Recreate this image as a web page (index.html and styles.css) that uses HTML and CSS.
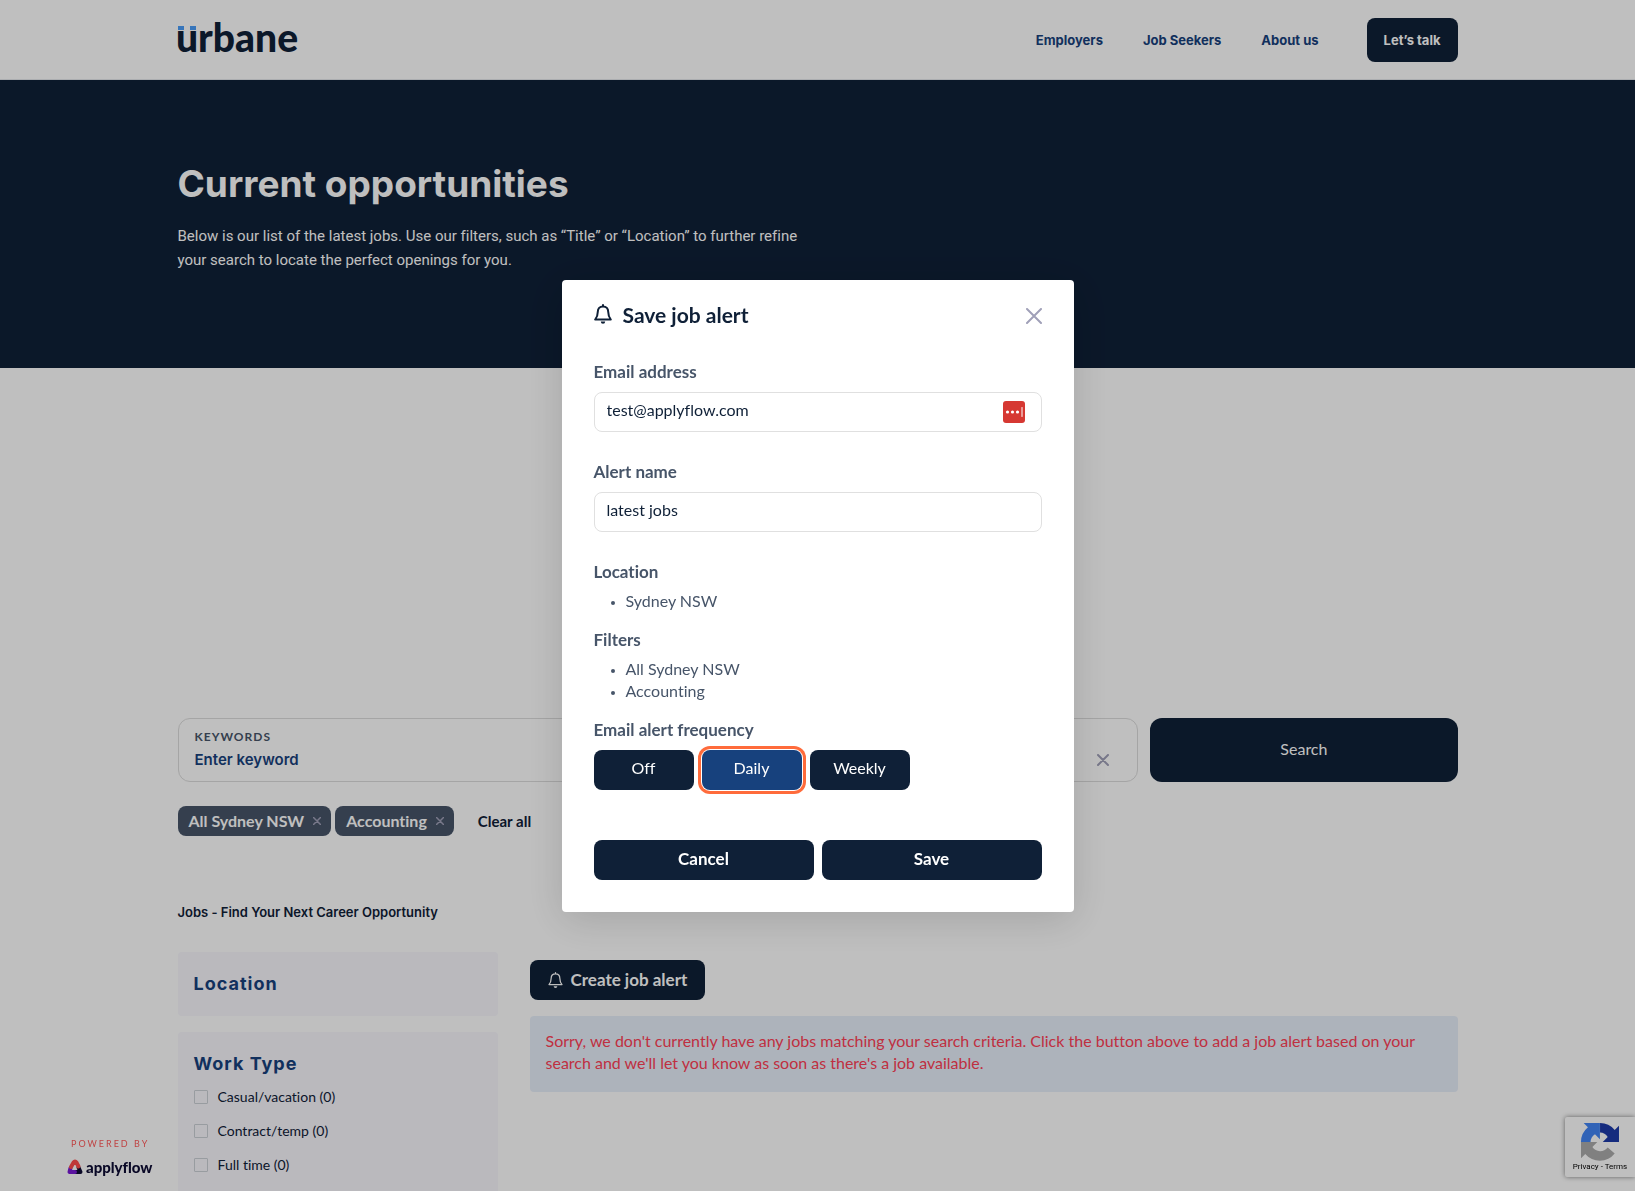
FILE: index.html
```html
<!DOCTYPE html>
<html lang="en">
<head>
    <meta charset="UTF-8">
    <meta name="viewport" content="width=device-width, initial-scale=1.0">
    <title>Current opportunities</title>
    <link rel="stylesheet" href="styles.css">
</head>
<body>
    <header class="site-header">
        <div class="container header-row">
            <a href="#" class="logo" aria-label="urbane">
                <svg width="124" height="46" viewBox="0 0 124 46">
                    <rect x="0" y="9" width="6" height="4" fill="#4a9df8"/>
                    <rect x="12" y="9" width="6" height="4" fill="#4a9df8"/>
                    <text x="-2" y="35" class="logo-text">urbane</text>
                </svg>
            </a>
            <nav class="nav">
                <a href="#">Employers</a>
                <a href="#">Job Seekers</a>
                <a href="#">About us</a>
                <a href="#" class="nav-button">Let’s talk</a>
            </nav>
        </div>
    </header>

    <section class="hero">
        <div class="container">
            <h1>Current opportunities</h1>
            <p>Below is our list of the latest jobs. Use our filters, such as “Title” or “Location” to further refine your search to locate the perfect openings for you.</p>
        </div>
    </section>

    <main class="container content">
        <form class="search">
            <div class="search-box">
                <div class="search-field">
                    <label for="keywords">Keywords</label>
                    <input type="text" id="keywords" placeholder="Enter keyword">
                </div>
                <button type="button" class="search-clear" aria-label="Clear location">
                    <svg width="12" height="12" viewBox="0 0 12 12"><path d="M1 1l10 10M11 1L1 11"/></svg>
                </button>
            </div>
            <button type="submit" class="search-button">Search</button>
        </form>

        <div class="tags">
            <button type="button" class="tag">All Sydney NSW
                <svg width="8" height="8" viewBox="0 0 8 8"><path d="M0.5 0.5l7 7M7.5 0.5l-7 7"/></svg>
            </button>
            <button type="button" class="tag">Accounting
                <svg width="8" height="8" viewBox="0 0 8 8"><path d="M0.5 0.5l7 7M7.5 0.5l-7 7"/></svg>
            </button>
            <button type="button" class="clear-all">Clear all</button>
        </div>

        <h2 class="page-title">Jobs - Find Your Next Career Opportunity</h2>

        <div class="columns">
            <aside class="sidebar">
                <section class="filter-card">
                    <h3>Location</h3>
                </section>
                <section class="filter-card">
                    <h3>Work Type</h3>
                    <label class="option"><input type="checkbox"> Casual/vacation (0)</label>
                    <label class="option"><input type="checkbox"> Contract/temp (0)</label>
                    <label class="option"><input type="checkbox"> Full time (0)</label>
                </section>
            </aside>
            <div class="results">
                <button type="button" class="create-alert">
                    <svg width="15" height="18" viewBox="0 0 18 20" class="bell"><path d="M9 2.500c-3.300 0-5.200 2.300-5.200 5.300 0 4-1 5.700-2.600 7.700h15.600c-1.600-2-2.600-3.700-2.600-7.700 0-3-1.900-5.300-5.200-5.300zM9 2.500v-1.500"/><path class="clapper" d="M6.800 17.500h4.400a2.200 2.200 0 0 1-4.400 0z"/></svg>
                    Create job alert
                </button>
                <p class="no-jobs">Sorry, we don't currently have any jobs matching your search criteria. Click the button above to add a job alert based on your search and we'll let you know as soon as there's a job available.</p>
            </div>
        </div>
    </main>

    <a href="#" class="powered">
        <span class="powered-label">Powered by</span>
        <span class="powered-brand">
            <svg width="16" height="16" viewBox="0 0 16 16" fill="none" stroke-width="4" stroke-linecap="round">
                <path d="M8 13H13.500L11.500 8.500" stroke="#0d0b33" stroke-linejoin="round"/>
                <path d="M3.500 9L2.500 13H8" stroke="#7a1ad6" stroke-linejoin="round"/>
                <path d="M4 8L6.500 3.500Q8 1.500 9.500 3.500L11.500 7.500" stroke="#ff4d4d"/>
            </svg>
            applyflow
        </span>
    </a>

    <div class="recaptcha">
        <svg width="38" height="38" viewBox="0 0 64 64">
            <path fill="#1c3aa9" d="M64 31.960c0-.460-.010-.920-.030-1.370V4.610l-7.180 7.180A31.940 31.940 0 0 0 32.070.030V16.200a16 16 0 0 1 12.900 7.500l-8.330 8.260z"/>
            <path fill="#4285f4" d="M31.860 0H4.520l7.180 7.180A31.940 31.940 0 0 0 0 31.960h16.100a16 16 0 0 1 7.420-12.930l8.340 8.260z"/>
            <path fill="#ababab" d="M0 32.040V59.400l7.180-7.180a31.940 31.940 0 0 0 49.570-.900L45.070 41.200a16 16 0 0 1-25.900-.700l8.260-8.460z"/>
        </svg>
        <div><a href="#">Privacy</a> - <a href="#">Terms</a></div>
    </div>

    <div class="overlay">
        <form class="modal" role="dialog" aria-labelledby="modal-title">
            <div class="modal-header">
                <svg width="18" height="20" viewBox="0 0 18 20" class="bell"><path d="M9 2.500c-3.300 0-5.200 2.300-5.200 5.300 0 4-1 5.700-2.600 7.700h15.600c-1.600-2-2.600-3.700-2.600-7.700 0-3-1.900-5.300-5.200-5.300zM9 2.500v-1.500"/><path class="clapper" d="M6.800 17.500h4.400a2.200 2.200 0 0 1-4.400 0z"/></svg>
                <h2 id="modal-title">Save job alert</h2>
                <button type="button" class="modal-close" aria-label="Close">
                    <svg width="16" height="16" viewBox="0 0 16 16"><path d="M1 1l14 14M15 1L1 15"/></svg>
                </button>
            </div>

            <div class="field">
                <label for="email">Email address</label>
                <div class="input-wrap">
                    <input type="email" id="email" value="test@applyflow.com">
                    <svg class="autofill" width="22" height="22" viewBox="0 0 22 22">
                        <rect width="22" height="22" rx="3" fill="#d63832"/>
                        <circle cx="4.500" cy="11" r="1.600" fill="#fff"/>
                        <circle cx="9.500" cy="11" r="1.600" fill="#fff"/>
                        <circle cx="14.500" cy="11" r="1.600" fill="#fff"/>
                        <path d="M19 6.500v9" stroke="#fff"/>
                    </svg>
                </div>
            </div>
            <div class="field">
                <label for="alert-name">Alert name</label>
                <input type="text" id="alert-name" value="latest jobs">
            </div>

            <h3>Location</h3>
            <ul>
                <li>Sydney NSW</li>
            </ul>
            <h3>Filters</h3>
            <ul>
                <li>All Sydney NSW</li>
                <li>Accounting</li>
            </ul>
            <h3>Email alert frequency</h3>
            <div class="frequency">
                <button type="button">Off</button>
                <button type="button" class="selected">Daily</button>
                <button type="button">Weekly</button>
            </div>

            <div class="modal-actions">
                <button type="button">Cancel</button>
                <button type="submit">Save</button>
            </div>
        </form>
    </div>
</body>
</html>
```
FILE: styles.css
```css
* {
    box-sizing: border-box;
}
body {
    margin: 0;
    height: 100vh;
    overflow: hidden;
    background: white;
    color: #0f2037;
    font-family: Lato, sans-serif;
    font-size: 16px;
    line-height: 22px;
    font-variant-ligatures: none;
}
h1, h2, h3, p, ul {
    margin: 0;
}
a {
    color: inherit;
    text-decoration: none;
}
button, input {
    font: inherit;
    font-variant-ligatures: none;
    color: inherit;
}
button {
    border: none;
    padding: 0;
    background: none;
    cursor: pointer;
}
.container {
    max-width: 1280px;
    margin: 0 auto;
}

/* header */
.site-header {
    border-bottom: 1px solid #e5e7eb;
}
.header-row {
    display: flex;
    align-items: center;
    justify-content: space-between;
    height: 79px;
}
.logo svg {
    display: block;
    overflow: visible;
}
.logo-text {
    font-family: Lato, sans-serif;
    font-size: 39px;
    font-weight: 900;
    fill: #0f2037;
}
.nav {
    display: flex;
    align-items: center;
    gap: 40px;
    font-family: Inter, sans-serif;
    font-size: 13px;
    font-weight: 700;
    color: #17417d;
}
.nav-button {
    margin-left: 8px;
    padding: 11px 17px;
    border-radius: 8px;
    background: #0f2037;
    color: white;
}

/* hero */
.hero {
    padding: 80px 0 96px;
    background: #0f2037;
    color: white;
    font-family: Inter, sans-serif;
}
.hero h1 {
    font-size: 37px;
    font-weight: 700;
    line-height: 48px;
}
.hero p {
    max-width: 640px;
    margin-top: 16px;
    font-family: Roboto, sans-serif;
    font-size: 15px;
    line-height: 24px;
}

/* search */
.content {
    padding-top: 350px;
}
.search {
    display: flex;
    gap: 12px;
}
.search-box {
    display: flex;
    flex: 1;
    height: 64px;
    padding: 7px 28px 8px 16px;
    border: 1px solid #dcdcdc;
    border-radius: 12px;
}
.search-field {
    flex: 1;
}
.search-field label {
    display: block;
    color: #475569;
    font-size: 12px;
    font-weight: 700;
    letter-spacing: 1px;
    text-transform: uppercase;
}
.search-field input {
    display: block;
    width: 100%;
    margin-top: 1px;
    padding: 0;
    border: none;
    outline: none;
    background: none;
    font-family: Inter, sans-serif;
    font-size: 15px;
    font-weight: 600;
}
.search-field input::placeholder {
    color: #17417d;
}
.search-clear {
    align-self: flex-end;
}
svg path {
    stroke-linecap: round;
}
.search-clear svg, .modal-close svg {
    display: block;
    fill: none;
    stroke: #a0a0b8;
    stroke-width: 2;
}
.search-clear svg {
    margin-bottom: 7px;
}
.search-button {
    width: 24%;
    padding-bottom: 3px;
    border-radius: 12px;
    background: #0f2037;
    color: white;
}
.tags {
    display: flex;
    align-items: center;
    gap: 4px;
    margin-top: 24px;
}
.tag {
    display: flex;
    align-items: center;
    gap: 9px;
    height: 30px;
    padding: 0 10px 1px 11px;
    border-radius: 8px;
    background: #475569;
    color: white;
    font-weight: 700;
}
.tag svg {
    fill: none;
    stroke: #a0a0b8;
    stroke-width: 1.5;
}
.clear-all {
    margin-left: 20px;
    font-size: 15px;
    font-weight: 700;
}
.page-title {
    margin: 64px 0 28px;
    font-family: Inter, sans-serif;
    font-size: 13px;
    font-weight: 600;
    line-height: 24px;
}

/* filters and results */
.columns {
    display: flex;
    gap: 32px;
}
.sidebar {
    width: 25%;
}
.filter-card {
    margin-bottom: 16px;
    padding: 16px;
    border-radius: 4px;
    background: #f8f7fd;
}
.filter-card h3 {
    color: #17417d;
    font-family: Inter, sans-serif;
    font-size: 18px;
    font-weight: 700;
    line-height: 32px;
    letter-spacing: 1px;
}
.option {
    display: flex;
    align-items: center;
    gap: 10px;
    height: 34px;
    font-size: 14px;
}
.option input {
    appearance: none;
    width: 14px;
    height: 14px;
    margin: 0;
    border: 1px solid #cbd0d6;
    border-radius: 1px;
}
.results {
    flex: 1;
    padding-top: 8px;
}
.bell {
    fill: none;
    stroke: currentColor;
    stroke-width: 2;
    stroke-linejoin: round;
}
.bell .clapper {
    fill: currentColor;
    stroke: none;
}
.create-alert {
    display: flex;
    align-items: center;
    gap: 8px;
    height: 40px;
    padding: 0 18px 1px;
    border-radius: 8px;
    background: #0f2037;
    color: white;
    font-size: 17px;
    font-weight: 700;
}
.create-alert .bell {
    stroke-width: 1.5;
}
.no-jobs {
    margin-top: 16px;
    padding: 14px 16px 18px;
    border-radius: 4px;
    background: #e7effa;
    color: #ff4056;
}

/* badges in the bottom corners */
.powered {
    position: fixed;
    left: 67px;
    bottom: 13px;
    display: flex;
    flex-direction: column;
    gap: 4px;
}
.powered-label {
    padding-left: 4px;
    color: #ff5a5a;
    font-size: 9px;
    line-height: 16px;
    letter-spacing: 2px;
    text-transform: uppercase;
}
.powered-brand {
    display: flex;
    align-items: center;
    gap: 3px;
    color: #0d0b33;
    font-size: 15px;
    font-weight: 900;
}
.recaptcha {
    position: fixed;
    right: 0;
    bottom: 14px;
    width: 70px;
    height: 60px;
    padding-top: 6px;
    border-radius: 2px 0 0 2px;
    background: white;
    box-shadow: 0 0 5px gray;
    font-family: Roboto, sans-serif;
    font-size: 8px;
    line-height: 12px;
    text-align: center;
    color: black;
}
.recaptcha svg {
    display: block;
    margin: 0 auto;
}

/* modal */
.overlay {
    position: fixed;
    inset: 0;
    display: flex;
    align-items: center;
    justify-content: center;
    background: rgba(0, 0, 0, 0.25);
}
.modal {
    width: 512px;
    padding: 24px 32px 32px;
    border-radius: 4px;
    background: white;
    box-shadow: 0 8px 40px rgba(0, 0, 0, 0.14);
}
.modal-header {
    display: flex;
    align-items: flex-start;
    gap: 11px;
    height: 24px;
    margin-bottom: 33px;
}
.modal-header h2 {
    font-size: 21px;
    font-weight: 700;
}
.modal-close {
    align-self: center;
    margin-left: auto;
}
.field {
    margin-bottom: 29px;
}
.field label, .modal h3 {
    display: block;
    margin-bottom: 9px;
    color: #475569;
    font-size: 17px;
    font-weight: 700;
}
.field input {
    display: block;
    width: 100%;
    height: 40px;
    padding: 0 12px 5px;
    border: 1px solid #e0e0e0;
    border-radius: 8px;
    background: white;
}
.input-wrap {
    position: relative;
}
.autofill {
    position: absolute;
    top: 9px;
    right: 17px;
}
.modal h3 {
    margin-bottom: 7px;
}
.modal ul {
    margin-bottom: 17px;
    padding-left: 32px;
    color: #475569;
}
.modal li::marker {
    font-size: 13px;
}
.frequency {
    display: flex;
    gap: 8px;
    margin-top: 9px;
}
.frequency button, .modal-actions button {
    height: 40px;
    padding-bottom: 3px;
    border-radius: 8px;
    background: #0f2037;
    color: white;
}
.frequency button {
    width: 100px;
}
.frequency .selected {
    background: #17417d;
    box-shadow: 0 0 0 1px white, 0 0 0 4px #ff6b3b;
}
.modal-actions {
    display: flex;
    gap: 8px;
    margin-top: 50px;
}
.modal-actions button {
    flex: 1;
    padding-bottom: 2px;
    font-size: 17px;
    font-weight: 700;
}
```
